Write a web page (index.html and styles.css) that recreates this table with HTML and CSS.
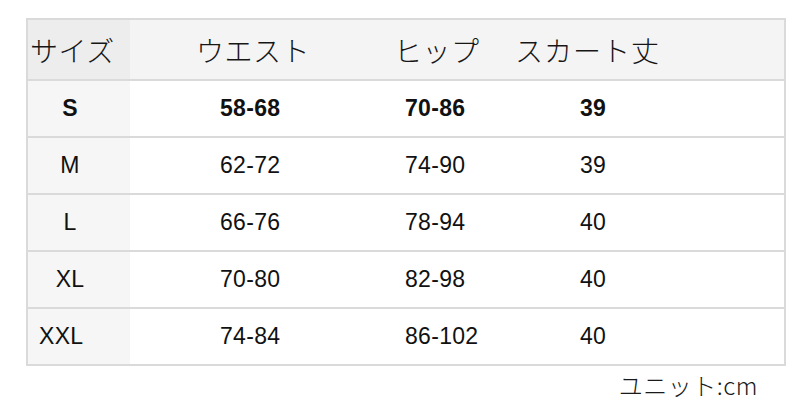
FILE: index.html
```html
<!DOCTYPE html>
<html lang="ja">
<head>
<meta charset="utf-8">
<link rel="stylesheet" href="styles.css">
</head>
<body>
<div class="sheet">
  <div class="table">
    <div class="head">
      <div class="hcell h1">サイズ</div>
      <div class="hcell h2">ウエスト</div>
      <div class="hcell h3">ヒップ</div>
      <div class="hcell h4">スカート丈</div>
    </div>
    <div class="row bold">
      <div class="cell c1">S</div>
      <div class="cell c2">58-68</div>
      <div class="cell c3">70-86</div>
      <div class="cell c4">39</div>
    </div>
    <div class="row">
      <div class="cell c1">M</div>
      <div class="cell c2">62-72</div>
      <div class="cell c3">74-90</div>
      <div class="cell c4">39</div>
    </div>
    <div class="row">
      <div class="cell c1">L</div>
      <div class="cell c2">66-76</div>
      <div class="cell c3">78-94</div>
      <div class="cell c4">40</div>
    </div>
    <div class="row">
      <div class="cell c1">XL</div>
      <div class="cell c2">70-80</div>
      <div class="cell c3">82-98</div>
      <div class="cell c4">40</div>
    </div>
    <div class="row last">
      <div class="cell c1 xxl">XXL</div>
      <div class="cell c2">74-84</div>
      <div class="cell c3">86-102</div>
      <div class="cell c4">40</div>
    </div>
  </div>
  <div class="unit">ユニット:cm</div>
</div>
</body>
</html>
```
FILE: styles.css
```css
html, body {
  margin: 0;
  padding: 0;
  background: #ffffff;
}

.sheet {
  width: 800px;
  height: 409px;
  padding-top: 18px;
  box-sizing: border-box;
}

.table {
  margin-left: 26px;
  width: 760px;
  box-sizing: border-box;
  border: 2px solid #dadada;
  border-bottom: none;
}

.head {
  display: grid;
  grid-template-columns: 102px 264px 121px 1fr;
  height: 59px;
  border-bottom: 2px solid #dadada;
  background: #f4f4f4;
  font-family: "Noto Sans CJK JP", sans-serif;
  font-weight: 300;
  font-size: 28px;
  color: #161616;
}

.hcell {
  display: flex;
  align-items: center;
  white-space: nowrap;
}

.h1 {
  background: #ededed;
  padding-left: 2px;
  letter-spacing: 0.5px;
}

.h2 {
  padding-left: 66px;
  letter-spacing: 0.5px;
}

.h3 {
  padding-left: 0;
  letter-spacing: 0.5px;
}

.h4 {
  letter-spacing: 1px;
}

.row {
  display: grid;
  grid-template-columns: 102px 275px 175px 1fr;
  height: 55px;
  border-bottom: 2px solid #dadada;
  font-family: "Liberation Sans", Arial, sans-serif;
  font-size: 23px;
  letter-spacing: 0.3px;
  color: #111111;
}

.row.bold {
  font-weight: 700;
}

.cell {
  display: flex;
  align-items: center;
  white-space: nowrap;
}

.c1 {
  background: #f6f6f6;
  justify-content: center;
  padding-right: 18px;
}

.c1.xxl {
  justify-content: flex-start;
  padding-left: 11px;
  padding-right: 0;
}

.c2 {
  padding-left: 90px;
}

.unit {
  margin-top: 3px;
  text-align: right;
  padding-right: 42px;
  font-family: "Noto Sans CJK JP", sans-serif;
  font-weight: 300;
  font-size: 24px;
  letter-spacing: 0.5px;
  line-height: 32px;
  color: #1a1a1a;
}
```
